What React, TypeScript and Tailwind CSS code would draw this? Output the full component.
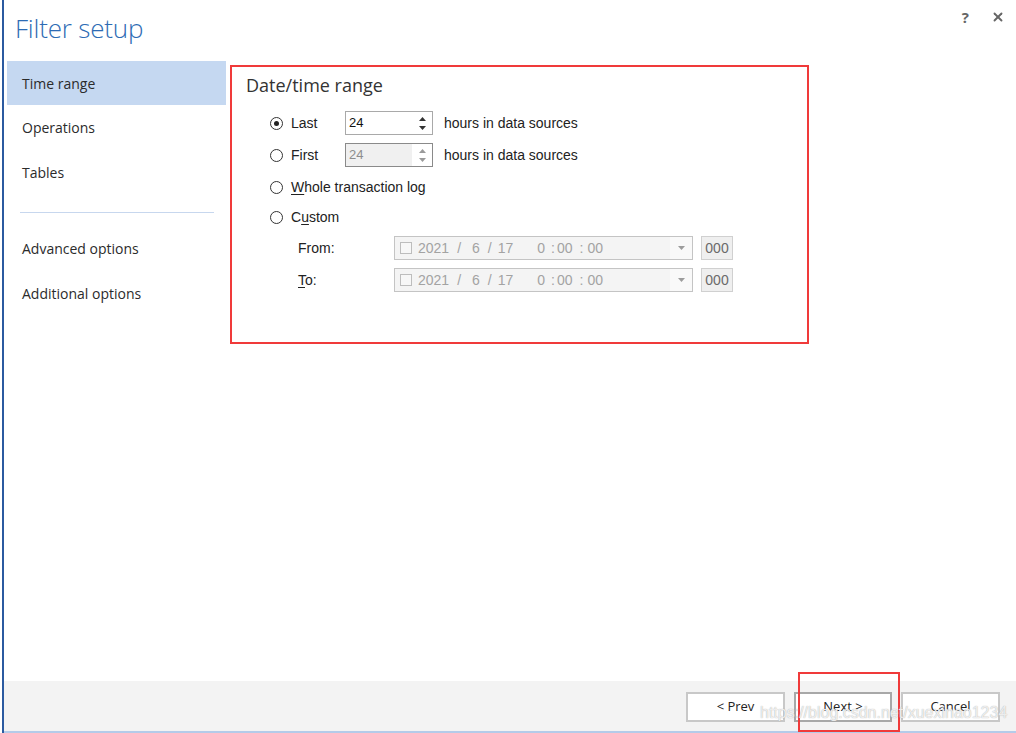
import { X } from "lucide-react";

const navTop = ["Time range", "Operations", "Tables"];
const navBottom = ["Advanced options", "Additional options"];

function Radio({ checked }: { checked?: boolean }) {
  return (
    <span className="w-[13px] h-[13px] rounded-full border border-[#333] flex items-center justify-center bg-white shrink-0">
      {checked && <span className="w-[5px] h-[5px] rounded-full bg-[#222]" />}
    </span>
  );
}

function SpinBox({ disabled }: { disabled?: boolean }) {
  return (
    <div
      className={`w-[88px] h-[24px] flex items-stretch border ${
        disabled ? "border-[#8a8a8a] bg-[#f0f0f0]" : "border-[#a9a9a9] bg-white"
      }`}
    >
      <span className={`flex-1 pl-[3px] flex items-center text-[13px] ${disabled ? "text-[#8d8d8d]" : "text-[#111]"}`}>24</span>
      <span className="w-[20px] bg-white flex flex-col items-center justify-center gap-[5px]">
        <svg width="7" height="4" viewBox="0 0 7 4"><path d="M3.5 0L7 4H0z" fill={disabled ? "#9a9a9a" : "#333"} /></svg>
        <svg width="7" height="4" viewBox="0 0 7 4"><path d="M0 0h7L3.5 4z" fill={disabled ? "#9a9a9a" : "#333"} /></svg>
      </span>
    </div>
  );
}

function DateBox() {
  return (
    <div className="flex items-center gap-[8px]">
      <div className="w-[299px] h-[24px] border border-[#c4c4c4] bg-[#f4f4f4] flex items-center text-[14px] text-[#a3a3a3]">
        <span className="ml-[5px] w-[12px] h-[12px] border border-[#bdbdbd] bg-[#f7f7f7]" />
        <span className="ml-[6px]">2021</span>
        <span className="ml-[8px]">/</span>
        <span className="ml-[11px]">6</span>
        <span className="ml-[8px]">/</span>
        <span className="ml-[6px]">17</span>
        <span className="ml-[24px]">0</span>
        <span className="ml-[6px]">:</span>
        <span className="ml-[2px]">00</span>
        <span className="ml-[7px]">:</span>
        <span className="ml-[4px]">00</span>
        <span className="ml-auto w-[22px] h-full bg-[#f9f9f9] flex items-center justify-center">
          <svg width="7" height="4" viewBox="0 0 7 4"><path d="M0 0h7L3.5 4z" fill="#9c9c9c" /></svg>
        </span>
      </div>
      <div className="w-[32px] h-[24px] border border-[#d0d0d0] bg-[#efefef] flex items-center justify-center text-[14px] text-[#6a6a6a]">
        000
      </div>
    </div>
  );
}

export default function App() {
  return (
    <div className="w-[1016px] h-[733px] bg-white pl-[2px] overflow-hidden relative font-['Open_Sans',sans-serif]">
      <div className="h-full border-l-2 border-[#2b5aa0] flex flex-col">
        <header className="h-[61px] flex items-start justify-between">
          <h1 className="ml-[11px] mt-[10px] text-[26px] font-light text-[#2d6bb4] leading-[36px] tracking-[-0.2px]">
            Filter setup
          </h1>
          <div className="flex items-center mt-[6px] mr-[11px] gap-[22px] text-[#666]">
            <span className="text-[15px] font-bold">?</span>
            <X size={14} strokeWidth={3.2} />
          </div>
        </header>

        <div className="flex-1 flex">
          <nav className="w-[222px] pl-[3px] text-[14px] text-[#2b2b2b]">
            {navTop.map((item, i) => (
              <div
                key={item}
                className={`pl-[15px] flex items-center ${i === 0 ? "bg-[#c5d8f1] h-[44px]" : "h-[45px]"}`}
              >
                {item}
              </div>
            ))}
            <div className="ml-[13px] w-[194px] h-px bg-[#c7d7ee] mt-[17px] mb-[13px]" />
            {navBottom.map((item) => (
              <div key={item} className="h-[45px] pl-[15px] flex items-center">
                {item}
              </div>
            ))}
          </nav>

          <div className="flex-1">
            <section className="ml-[4px] mt-[4px] w-[579px] h-[279px] border-2 border-[#f03a3a] font-['Liberation_Sans',sans-serif] text-[14px] text-[#222]">
              <h2 className="pl-[14px] pt-[6px] leading-[24px] text-[18px] text-[#333] font-['Open_Sans',sans-serif]">
                Date/time range
              </h2>
              <div className="pl-[38px] mt-[14px] flex flex-col">
                <div className="h-[24px] flex items-center">
                  <Radio checked />
                  <span className="ml-[8px] w-[54px]">Last</span>
                  <SpinBox />
                  <span className="ml-[11px]">hours in data sources</span>
                </div>
                <div className="h-[24px] mt-[8px] flex items-center">
                  <Radio />
                  <span className="ml-[8px] w-[54px]">First</span>
                  <SpinBox disabled />
                  <span className="ml-[11px]">hours in data sources</span>
                </div>
                <div className="h-[24px] mt-[8px] flex items-center">
                  <Radio />
                  <span className="ml-[8px]">
                    <span className="underline underline-offset-2">W</span>hole transaction log
                  </span>
                </div>
                <div className="h-[24px] mt-[6px] flex items-center">
                  <Radio />
                  <span className="ml-[8px]">
                    C<span className="underline underline-offset-2">u</span>stom
                  </span>
                </div>
                <div className="h-[24px] mt-[7px] flex items-center">
                  <span className="ml-[28px] w-[96px]">From:</span>
                  <DateBox />
                </div>
                <div className="h-[24px] mt-[8px] flex items-center">
                  <span className="ml-[28px] w-[96px]">
                    <span className="underline underline-offset-2">T</span>o:
                  </span>
                  <DateBox />
                </div>
              </div>
            </section>
          </div>
        </div>

        <footer className="h-[52px] bg-[#f3f3f3] border-b-2 border-[#b4cbe9] flex items-start justify-end pr-[16px] pt-[11px] gap-[9px] text-[13px] text-[#222]">
          <button className="w-[99px] h-[30px] bg-white border-2 border-[#c8c8c8]">&lt; Prev</button>
          <button className="w-[98px] h-[30px] bg-white border-2 border-[#a8a8a8]">Next &gt;</button>
          <button className="w-[99px] h-[30px] bg-white border-2 border-[#c8c8c8]">Cancel</button>
        </footer>
      </div>

      <div className="absolute left-[798px] top-[672px] w-[102px] h-[60px] border-2 border-[#f03a3a]" />
      <div className="absolute left-[760px] top-[703px] text-[16px] leading-[19px] text-white/80 font-['Liberation_Sans',sans-serif] [text-shadow:0_0_1px_#999] pointer-events-none">
        https://blog.csdn.net/xuexinao1234
      </div>
    </div>
  );
}
